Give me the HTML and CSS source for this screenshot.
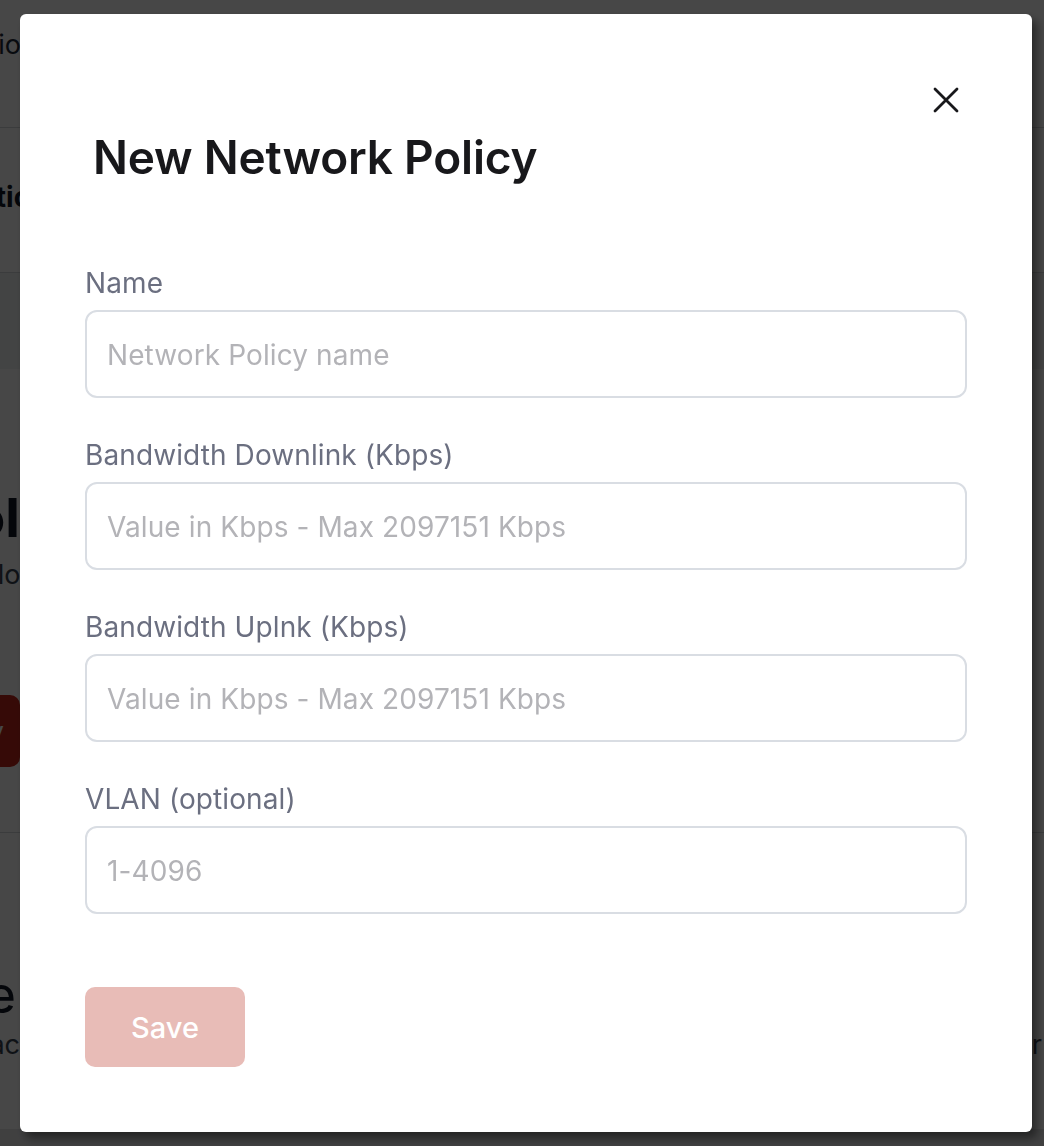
FILE: index.html
```html
<!DOCTYPE html>
<html lang="en">
<head>
<meta charset="utf-8">
<title>New Network Policy</title>
<link rel="stylesheet" href="styles.css">
</head>
<body>
<div class="page">
  <div class="bg-row bg-head">
    <div class="edge edge-head"><span>Integration</span></div>
  </div>
  <div class="bg-row bg-tabs">
    <div class="edge edge-tabs"><span>Options</span></div>
  </div>
  <div class="bg-row bg-empty"></div>
  <div class="bg-gap"></div>
  <div class="bg-section bg-policies">
    <div class="edge edge-big"><span>Pol</span></div>
    <div class="edge edge-sub"><span>Allow</span></div>
    <div class="edge edge-btn"><span class="bg-btn">New Policy</span></div>
  </div>
  <div class="bg-section bg-more">
    <div class="edge edge-big2"><span>Profile</span></div>
    <div class="bg-line">
      <div class="edge edge-sub2"><span>Reac</span></div>
      <span class="bg-tail">after</span>
    </div>
  </div>
  <div class="bg-foot"></div>
</div>

<div class="overlay">
  <div class="modal" role="dialog" aria-labelledby="modal-title">
    <button class="close" type="button" aria-label="Close">
      <svg width="26" height="26" viewBox="0 0 26 26" fill="none" stroke="#18181b" stroke-width="2.8" stroke-linecap="round"><path d="M2 2L24 24M24 2L2 24"/></svg>
    </button>
    <h2 class="title" id="modal-title">New Network Policy</h2>
    <form class="form">
      <div class="field">
        <label class="label" for="f-name">Name</label>
        <input class="input" id="f-name" type="text" placeholder="Network Policy name">
      </div>
      <div class="field">
        <label class="label" for="f-down">Bandwidth Downlink (Kbps)</label>
        <input class="input" id="f-down" type="text" placeholder="Value in Kbps - Max 2097151 Kbps">
      </div>
      <div class="field">
        <label class="label" for="f-up">Bandwidth Uplnk (Kbps)</label>
        <input class="input" id="f-up" type="text" placeholder="Value in Kbps - Max 2097151 Kbps">
      </div>
      <div class="field">
        <label class="label" for="f-vlan">VLAN (optional)</label>
        <input class="input" id="f-vlan" type="text" placeholder="1-4096">
      </div>
      <div class="actions">
        <button class="save" type="button">Save</button>
      </div>
    </form>
  </div>
</div>
</body>
</html>
```
FILE: styles.css
```css
* { box-sizing: border-box; }
html, body { margin: 0; padding: 0; }
body {
  font-family: Inter, "Noto Sans", "Liberation Sans", sans-serif;
  background: #ffffff;
  color: #111111;
  width: 1044px;
  height: 1146px;
  overflow: hidden;
}

/* background page */
.page { display: flex; flex-direction: column; width: 1044px; height: 1146px; }
.bg-row { border-bottom: 1px solid #d4d6da; display: flex; flex-direction: column; }
.bg-head { height: 128px; padding-top: 28px; }
.bg-tabs { height: 145px; padding-top: 52px; }
.bg-empty { height: 96px; background: #f1f2f4; border-bottom: none; }
.bg-gap { height: 62px; background: #ffffff; }
.bg-section { display: flex; flex-direction: column; }
.bg-policies { height: 402px; padding-top: 54px; border-bottom: 1px solid #d4d6da; }
.bg-more { height: 296px; padding-top: 130px; }
.bg-foot { flex: 1; background: #e4e5e7; }
.edge { display: flex; justify-content: flex-end; white-space: nowrap; }
.edge-head { width: 37px; font-size: 27px; color: #1f2937; }
.edge-tabs { width: 64px; font-size: 28px; font-weight: 700; color: #111827; }
.edge-big { width: 20px; font-size: 54px; font-weight: 700; color: #111827; }
.edge-sub { width: 42px; font-size: 27px; color: #374151; margin-top: 8px; }
.edge-btn { width: 20px; margin-top: 104px; }
.bg-btn { display: inline-flex; align-items: center; height: 72px; padding: 0 16px; background: #c2261a; color: #ffffff; font-size: 27px; border-radius: 10px; }
.edge-big2 { width: 16px; font-size: 52px; color: #111827; }
.bg-line { display: flex; justify-content: space-between; align-items: baseline; margin-top: 2px; }
.edge-sub2 { width: 20px; font-size: 27px; color: #374151; }
.bg-tail { font-size: 27px; color: #374151; margin-right: 2px; }

/* overlay + modal */
.overlay {
  position: fixed;
  inset: 0;
  background: rgba(0, 0, 0, 0.72);
  padding: 14px 12px 14px 20px;
  display: flex;
}
.modal {
  position: relative;
  flex: 1;
  background: #ffffff;
  border-radius: 6px;
  box-shadow: 5px 6px 10px rgba(0, 0, 0, 0.45);
  padding: 118px 65px 64px 65px;
  display: flex;
  flex-direction: column;
}
.close {
  position: absolute;
  top: 73px;
  right: 73px;
  width: 26px;
  height: 26px;
  padding: 0;
  border: none;
  background: transparent;
  display: flex;
  cursor: pointer;
}
.title {
  margin: 0;
  padding-left: 8px;
  font-size: 46px;
  line-height: 50px;
  font-weight: 600;
  color: #18181b;
  letter-spacing: -0.2px;
}
.form { display: flex; flex-direction: column; gap: 37px; margin-top: 81px; }
.field { display: flex; flex-direction: column; gap: 7px; }
.label {
  font-size: 28px;
  line-height: 40px;
  color: #6b6f80;
  letter-spacing: 0.1px;
}
.input {
  height: 88px;
  width: 100%;
  border: 2px solid #d9dde3;
  border-radius: 12px;
  padding: 2px 20px 0;
  font-family: inherit;
  font-size: 28px;
  letter-spacing: 0.1px;
  color: #18181b;
  background: #ffffff;
  outline: none;
}
.input::placeholder { color: #b3b3b7; }
.actions { display: flex; margin-top: 36px; }
.save {
  width: 160px;
  height: 80px;
  border: none;
  border-radius: 10px;
  background: #e8bcb7;
  color: #ffffff;
  font-family: inherit;
  font-size: 29px;
  font-weight: 500;
  cursor: pointer;
}
```
